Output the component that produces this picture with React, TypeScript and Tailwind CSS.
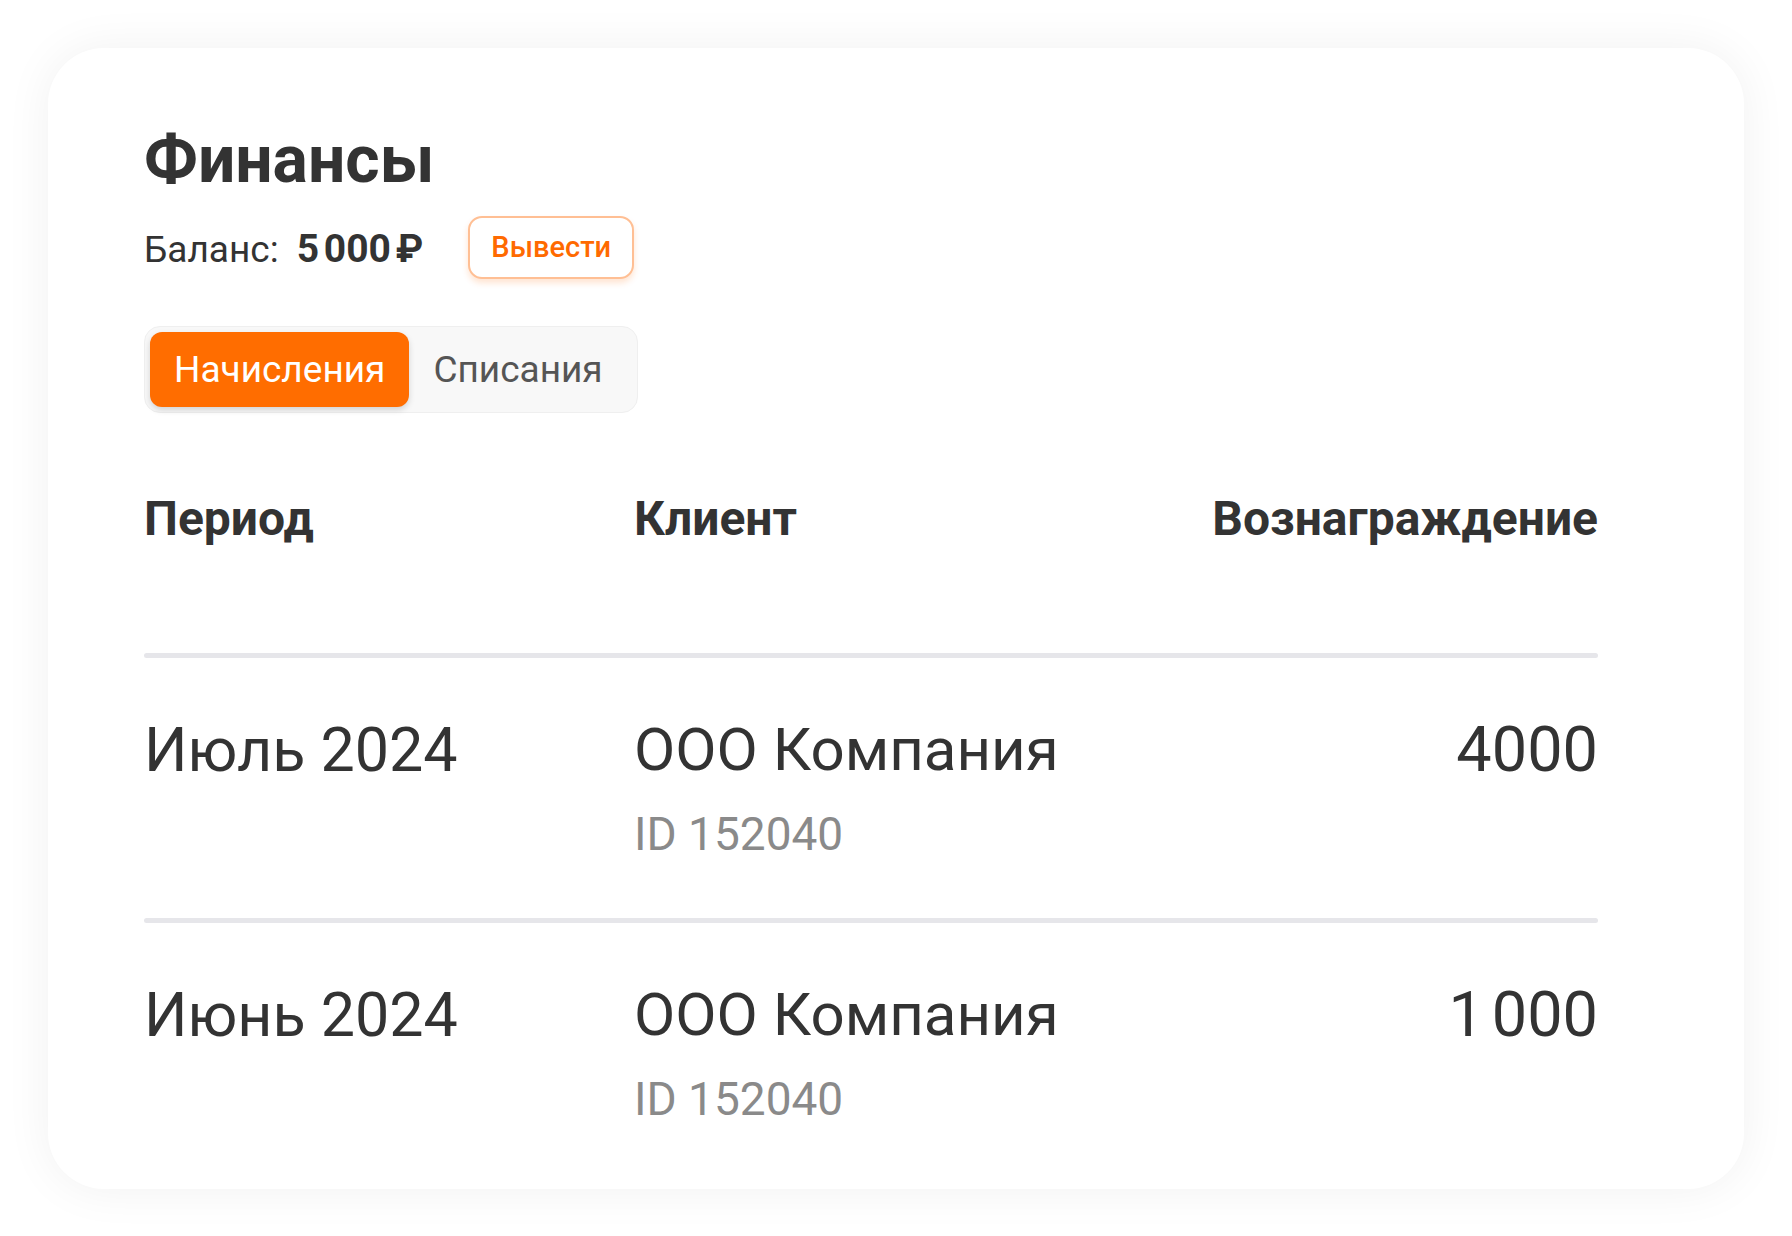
import React from 'react';

// строки начислений
const rows = [
  { period: 'Июль 2024', client: 'ООО Компания', id: 'ID 152040', amount: '4000' },
  { period: 'Июнь 2024', client: 'ООО Компания', id: 'ID 152040', amount: '1\u202F000' },
];

const App: React.FC = () => {
  return (
    <div className="min-h-screen bg-white p-12 font-['Roboto',sans-serif] text-[#333333]">
      <div className="rounded-[56px] bg-white pl-24 pr-[146px] pt-20 pb-[66px] shadow-[0_0_48px_rgba(0,0,0,0.06)]">
        {/* заголовок */}
        <h1 className="text-[66px] font-bold leading-[64px]">Финансы</h1>

        {/* баланс */}
        <div className="mt-6 flex h-[62px] items-center">
          <span className="pt-[4px] text-[37px] leading-none">Баланс:</span>
          <span className="ml-[18px] pt-[4px] text-[39px] font-bold leading-none">5&#8239;000&#8239;₽</span>
          <button className="ml-[45px] h-[63px] rounded-[14px] border-2 border-[#ffbf94] bg-white px-[21px] pt-[2px] text-[29px] font-medium text-[#ff6a00] shadow-[0_4px_6px_rgba(255,106,0,0.18)]">
            Вывести
          </button>
        </div>

        {/* вкладки */}
        <div className="mt-12 inline-flex rounded-[16px] border border-[#efefef] bg-[#f8f8f8] p-[5px]">
          <button className="h-[75px] rounded-[12px] bg-[#ff6d00] px-6 text-[37px] text-white shadow-[0_3px_6px_rgba(0,0,0,0.15)]">
            Начисления
          </button>
          <button className="h-[75px] pl-6 pr-[29px] text-[37px] text-[#555555]">Списания</button>
        </div>

        {/* таблица */}
        <div className="mt-[78px] grid grid-cols-[490px_1fr_auto] pb-[106px] text-[48px] font-bold leading-[56px]">
          <div>Период</div>
          <div>Клиент</div>
          <div className="text-right">Вознаграждение</div>
        </div>

        {rows.map((r, i) => (
          <div key={i}>
            <div className="h-[5px] rounded-full bg-[#e6e6ea]" />
            <div className={`grid grid-cols-[490px_1fr_auto] pt-[60px] ${i < rows.length - 1 ? 'pb-[60px]' : 'pb-0'}`}>
              <div className="text-[61px] leading-[64px]">{r.period}</div>
              <div>
                <div className="text-[60px] leading-[64px]">{r.client}</div>
                <div className="mt-[28px] text-[46px] leading-[48px] text-[#8a8a8a]">{r.id}</div>
              </div>
              <div className="text-right text-[63px] leading-[64px]">{r.amount}</div>
            </div>
          </div>
        ))}
      </div>
    </div>
  );
};

export default App;
